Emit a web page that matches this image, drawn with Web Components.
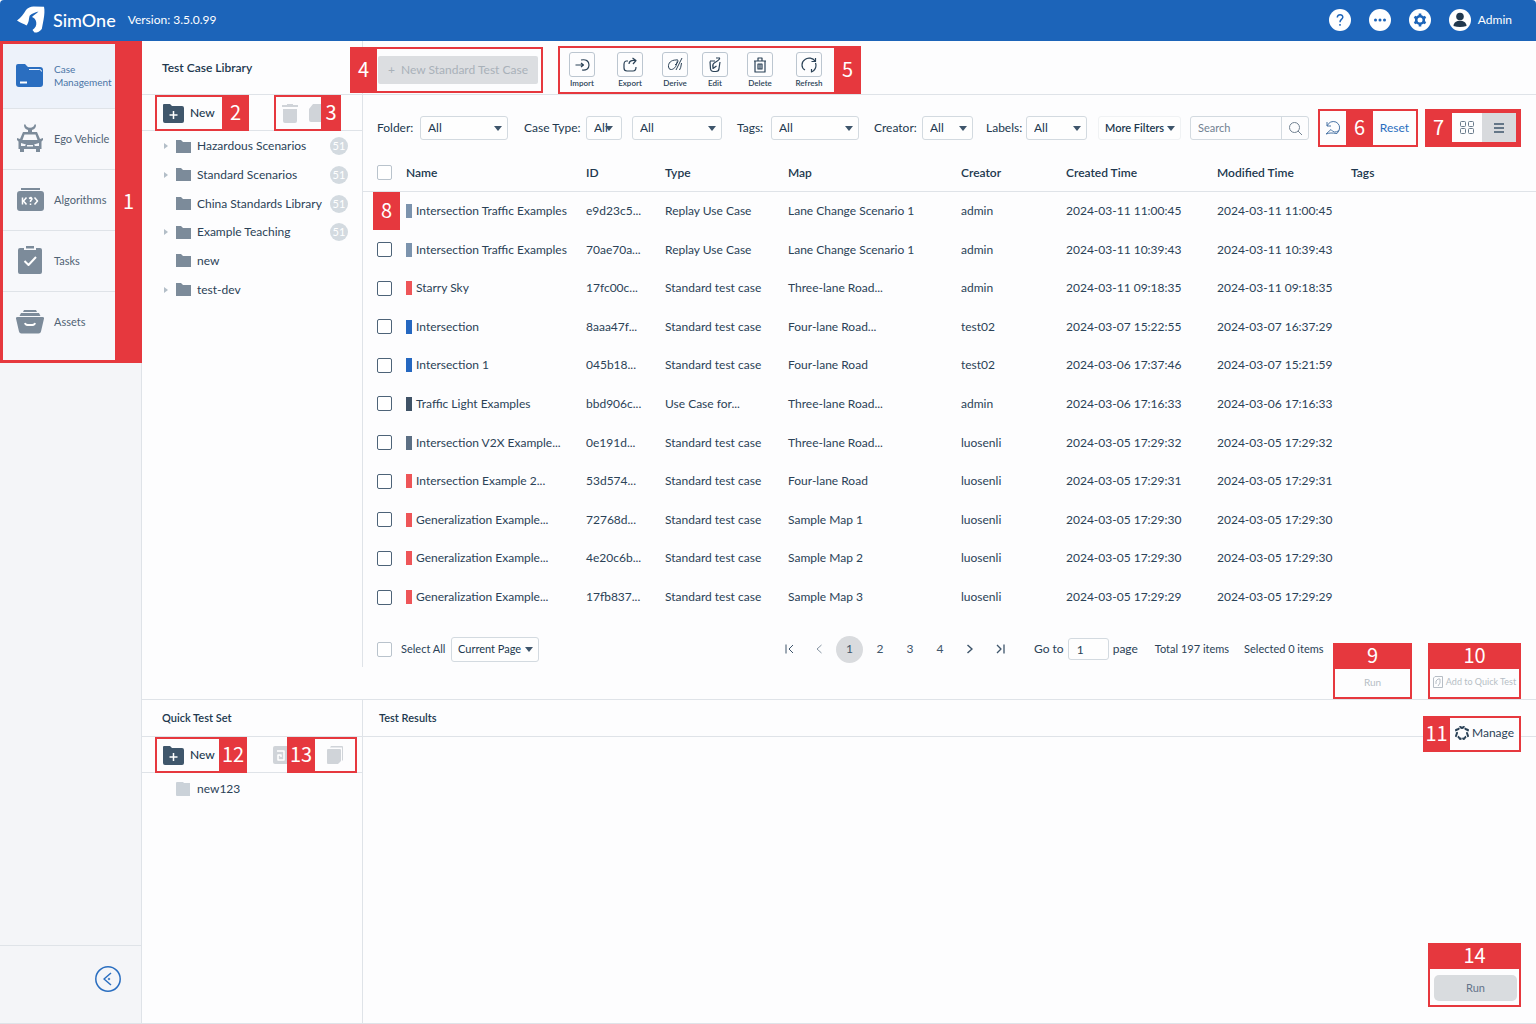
<!DOCTYPE html>
<html lang="en">
<head>
<meta charset="utf-8">
<title>SimOne</title>
<style>
  body {
    margin: 0;
    min-height: 100vh;
    font: 12px/16px Lato, "Noto Sans", sans-serif;
    color: #2b4257;
    background: #fdfdfe;
    --red: #e6383e;
    --line: #dfe3e8;
    --blue: #1c64b9;
    --dark: #21384e;
  }
</style>
</head>
<body>
<sim-app></sim-app>

<script>
const BASE = `
  *, *::before { box-sizing: border-box; }
  :host { white-space: nowrap; }
  button, select, input { font: inherit; color: inherit; margin: 0; }
  button { border: 0; padding: 0; background: none; cursor: pointer; }
  svg { display: block; flex: none; }
  ul { list-style: none; margin: 0; padding: 0; }
  h1, h2 { margin: 0; font-size: 12px; line-height: 16px; font-weight: 600; color: var(--dark); }
  input[type=checkbox] {
    appearance: none; display: block; width: 15px; height: 15px;
    border: 1px solid #4d6378; border-radius: 2px; background: #fff;
  }
  input[type=checkbox].soft { border-color: #b9c3cc; }
`;

const ICONS = {
  logo: ['0 0 28 28', `<path fill="#fff" d="M0 14.500C4 12 6.500 8 9 4 11 1.500 14 .2 17 .4L27 .8C27.800 4 27.500 9 26.500 14L24.800 23C23 25.500 20 26.800 17.500 26.600L15.500 24C18.500 22 19.800 19 19.200 16 18.800 13.500 17 11.500 15 11 17 9 19.500 7.500 21.500 5.500 18 6.500 14.500 7.500 12.800 9.500 11.600 12 12.500 16 9.500 19.500 7 18 3 16.500 0 14.500Z"/>`],
  cases: ['0 0 28 24', `<path fill="#2a6ec0" d="M2 0h7l3 3h12a3 3 0 0 1 3 3v14a3 3 0 0 1-3 3H3a3 3 0 0 1-3-3V2a2 2 0 0 1 2-2z"/><path fill="none" stroke="#eef3fb" d="M13 5.500h10.500a2 2 0 0 1 2 2"/><path stroke="#fff" stroke-width="2" d="M4 18.500h7"/>`],
  car: ['0 0 26 28', `<g fill="#7c8b9a"><path d="M8 0l1.500 2.500Q13 5 16.500 2.500L18 0l1 1q0 4-4 5v2h-4V6q-4-1-4-5z"/><path fill-rule="evenodd" d="M6 8h14l3 7 3-1v2l-1.500 1.500V25H23v3h-4v-3H7v3H3v-3H1.500v-7.500L0 16v-2l3 1zM7.500 10.500l-2 5.500h15l-2-5.500zM4 19v3h4l1-1.500zm18 0l-5 1.500 1 1.500h4zM10 21v1.500h6V21z"/></g>`],
  algo: ['0 0 27 23', `<path fill="#7c8b9a" d="M4 0h19v2H4zM3 3h21a3 3 0 0 1 3 3v14a3 3 0 0 1-3 3H3a3 3 0 0 1-3-3V6a3 3 0 0 1 3-3z"/><path fill="none" stroke="#fff" stroke-width="1.500" d="M5.500 9.500v7M9.500 9.500L6.500 13l3 3.500M12 10.500l2-1 1 1.500-1.500 2v1M13.500 15.500v1.500M17.500 9.500L20.500 13l-3 3.500"/>`],
  tasks: ['0 0 24 28', `<path fill="#7c8b9a" d="M2 2h4v2h12V2h4a2 2 0 0 1 2 2v22a2 2 0 0 1-2 2H2a2 2 0 0 1-2-2V4a2 2 0 0 1 2-2zM8 0h8v2.500H8z"/><path fill="none" stroke="#fff" stroke-width="2" d="M6.500 15l4 4L18 11"/>`],
  assets: ['0 0 28 24', `<path fill="#7c8b9a" d="M8 0h12l1 2H7zM5 3h18l1.500 3h-21zM1.500 7h25a1.500 1.500 0 0 1 1.400 2L25 21.500a2.500 2.500 0 0 1-2.500 2h-17a2.500 2.500 0 0 1-2.500-2L.1 9A1.500 1.500 0 0 1 1.500 7z"/><path fill="none" stroke="#fff" stroke-width="2" d="M9 13c.5 2 1.500 2 5 2s4.500 0 5-2"/>`],
  newFolder: ['0 0 21 19', `<path fill="#3f566b" d="M1 0h6l2 2h10a2 2 0 0 1 2 2v13a2 2 0 0 1-2 2H2a2 2 0 0 1-2-2V1a1 1 0 0 1 1-1z"/><path stroke="#fff" stroke-width="1.500" d="M10.500 7v8M6.500 11h8"/>`],
  folder: ['0 0 15 13', `<path fill="#7c8b9a" d="M0 0h5l2 2h8v11H0z"/>`],
  folderSoft: ['0 0 15 14', `<path fill="#cbd2d9" d="M1 0h6l1 1h6v13H1a1 1 0 0 1-1-1V1a1 1 0 0 1 1-1z"/>`],
  caretRight: ['0 0 4 6', `<path fill="#b3bec8" d="M0 0l4 3-4 3z"/>`],
  caret: ['0 0 8 5', `<path fill="#3e556b" d="M0 0h8L4 5z"/>`],
  trash: ['0 0 16 19', `<path fill="#d0d4d9" d="M5 0h6v1h5v2H0V1h5zM1 5h14v12a2 2 0 0 1-2 2H3a2 2 0 0 1-2-2z"/>`],
  clip: ['0 0 18 18', `<path fill="#d0d4d9" d="M4 0h8l2 3h4v13a2 2 0 0 1-2 2H2a2 2 0 0 1-2-2V5z"/>`],
  doc: ['0 0 14 18', `<path fill="#d0d4d9" d="M2 0h12v18H2a2 2 0 0 1-2-2V2a2 2 0 0 1 2-2z"/><path fill="none" stroke="#fff" stroke-width="1.500" d="M4 5h7v9H5v-5h3v2"/>`],
  copy: ['0 0 16 18', `<path fill="#d0d4d9" d="M4 0h11a1 1 0 0 1 1 1v13l-1 1V1.500H3zM1 3h12a1 1 0 0 1 1 1v11l-3 3H1a1 1 0 0 1-1-1V4a1 1 0 0 1 1-1z"/>`],
  imp: ['0 0 16 16', `<path stroke-width="1.200" d="M1.500 8h8M7 6l2.500 2L7 10M7 3c5-1 8 1 8 5s-3 5.500-7 5"/>`],
  exp: ['0 0 16 16', `<path stroke-width="1.200" d="M6 4H4Q2 4.500 2 7v4q0 3 3 3h6q3 0 3-4M7 7q0-4 6-3.500M10.500 1L14 3.500 11 7"/>`],
  der: ['0 0 16 16', `<path d="M9 3C4 3 1 6 1.500 10q.5 3 3 2.500C8 12 10 8 10 4.500M9 3q2-1 2 1T8 8M15 1L9 13M14.500 6q-.5 5-2 7"/>`],
  edit: ['0 0 14 16', `<path stroke-width="1.200" d="M2 4h5M2 4.500l.5 7.500q.5 2.500 3 2.500h2.500q3 0 3-3L12 5M5 10.500Q4 7 7 5.500T12 1.500M12 1H8M5 7.500v4L8.500 9"/>`],
  del: ['0 0 14 16', `<path stroke-width="1.200" d="M1 4h12M5 4V1h4v3M2 4v11h10V4M5 7h4v5H5zM7 7v5"/>`],
  ref: ['0 0 16 16', `<path stroke-width="1.200" d="M4 13C0 11 0 5 4 2.500 7 0 12 1 14 4M10.500 4.500H14.500V1M14.500 6c1.500 4-1 8-4 9M10.500 12v3.500"/>`],
  search: ['0 0 13 13', `<circle cx="5.500" cy="5.500" r="5"/><path d="M9 9l4 4"/>`],
  swap: ['0 0 16 16', `<path d="M2 6Q5 0 11 2q5 3 3 8.500Q9 14 6 9.500M2 2v4h4M1 14l5-4.500M1 14q3-1 5-1t6 .5l2-3"/>`],
  grid: ['0 0 14 13', `<rect x=".5" y=".5" width="5" height="5" rx="1"/><rect x="8.500" y=".5" width="5" height="5" rx="1"/><rect x=".5" y="7.500" width="5" height="5" rx="1"/><rect x="8.500" y="7.500" width="5" height="5" rx="1"/>`],
  list: ['0 0 10 10', `<path stroke-width="1.500" d="M0 1h10M0 5h10M0 9h10"/>`],
  first: ['0 0 9 10', `<path d="M1 0.500v9M8 1L4 5l4 4"/>`],
  prev: ['0 0 6 10', `<path d="M5.500 1l-4.500 4 4.500 4"/>`],
  next: ['0 0 6 10', `<path stroke-width="1.500" d="M.5 1L5 5 .5 9"/>`],
  last: ['0 0 9 10', `<path stroke-width="1.300" d="M8 0.500v9M1 1l4 4-4 4"/>`],
  note: ['0 0 10 12', `<path d="M2 .5h7.500v11H.5V2zM3 8V5l2-2h2v4l-2 3"/>`],
  cog: ['0 0 16 16', `<path stroke-width="2" stroke-dasharray="5 1" d="M6 2L8 3l2-1 1.500 2L14 5l-1 3 1 3-2.500 1L10 14l-2-1-2 1-1.500-2L2 11l1-3-1-3 2.500-1z"/>`],
  help: ['0 0 22 22', `<circle cx="11" cy="11" r="11" fill="#fff"/><path fill="none" stroke="#1c64b9" stroke-width="1.500" d="M8.300 8.500C8.300 4.500 14 5 13.800 8.300 13.600 10.500 11 10.500 11 13.200M11 15v1.800"/>`],
  more: ['0 0 22 22', `<circle cx="11" cy="11" r="11" fill="#fff"/><g fill="#1c64b9"><circle cx="6.500" cy="11" r="1.500"/><circle cx="11" cy="11" r="1.500"/><circle cx="15.500" cy="11" r="1.500"/></g>`],
  gear: ['0 0 22 22', `<circle cx="11" cy="11" r="11" fill="#fff"/><circle cx="11" cy="11" r="3.800" fill="none" stroke="#1c64b9" stroke-width="2.600"/><path stroke="#1c64b9" stroke-width="2.600" d="M11 4.500v3M11 14.500v3M5.400 7.800l2.400 1.400M14.200 12.800l2.400 1.400M5.400 14.200l2.400-1.400M14.200 9.200l2.400-1.400"/>`],
  user: ['0 0 22 22', `<circle cx="11" cy="11" r="11" fill="#fff"/><circle cx="11" cy="7.500" r="3.800" fill="#21384e"/><path fill="#21384e" d="M4.500 17c0-7 13-7 13 0q-6.500 2-13 0z"/>`],
  collapse: ['0 0 26 26', `<circle cx="13" cy="13" r="12.200" stroke-width="1.500"/><path stroke-width="1.500" d="M16 7l-7 6 7 6"/><circle cx="14" cy="13" r=".8"/>`]
};

function icon(name) {
  const [box, body] = ICONS[name];
  const [, , w, h] = box.split(' ');
  return `<svg viewBox="${box}" width="${w}" height="${h}" fill="none" stroke-linejoin="round" aria-hidden="true">${body}</svg>`;
}

// line icons take the text colour
const line = name => icon(name).replace('<svg', '<svg stroke="currentColor"');

function define(tag, css, html) {
  customElements.define(tag, class extends HTMLElement {
    constructor() {
      super();
      this.attachShadow({ mode: 'open' });
    }
    connectedCallback() {
      const body = typeof html === 'function' ? html(this) : html;
      this.shadowRoot.innerHTML = `<style>${BASE}${css}</style>${body}`;
    }
  });
}

// red numbered frame; content goes before the number, or after it with slot="end"
define('mark-box', `
  :host { display: flex; box-sizing: border-box; align-items: stretch; position: relative; z-index: 1; border: var(--b, 2px) solid var(--red); background: #fdfdfe; }
  :host([top]) { flex-direction: column; }
  .num {
    display: flex; align-items: center; justify-content: center; flex: none; width: var(--n, 27px);
    padding-bottom: 2px; background: var(--red); color: #fff;
    font: 400 20px/22px "Noto Sans CJK SC", sans-serif;
  }
  :host([side=left]) { border-left: 0; }
  :host([side=right]) { border-right: 0; }
  :host([top]) .num { width: auto; height: 24px; padding-bottom: 4px; }
  slot { display: contents; }
`, el => `<slot></slot><span class="num">${el.getAttribute('n')}</span><slot name="end"></slot>`);

define('drop-down', `
  :host { display: flex; align-items: center; flex: none; color: var(--dark); }
  label { width: var(--l); }
  .box { display: grid; align-items: center; width: var(--w, 88px); }
  select {
    grid-area: 1 / 1; width: 100%; height: var(--h, 24px); padding: 0 7px; appearance: none;
    border: 1px solid #d3dae0; border-radius: 3px; background: #fefefe;
  }
  svg { grid-area: 1 / 1; justify-self: end; margin-right: var(--caret, 6px); pointer-events: none; }
  :host([small]) select { font-size: 11px; padding: 0 6px; }
  :host([plain]) select { border-color: #f0f2f4; font-weight: 600; }
`, el => {
  const label = el.getAttribute('label');
  const name = el.getAttribute('name') || label;
  return `${label ? `<label for="s">${label}:</label>` : ''}
    <span class="box"><select id="s" aria-label="${name}"><option>${el.getAttribute('value') || 'All'}</option></select>${icon('caret')}</span>`;
});

define('app-header', `
  :host { display: flex; box-sizing: border-box; align-items: center; height: 41px; padding: 0 22px 2px 17px; background: var(--blue); color: #fff; border-radius: 4px 4px 0 0; }
  .name { font-size: 18px; line-height: 24px; margin: 0 12px 0 8px; color: #fff; font-weight: 500; }
  nav { display: flex; align-items: center; gap: 18px; margin-left: auto; }
  .user { display: flex; align-items: center; gap: 7px; padding-right: 2px; }
`, `
  ${icon('logo')}
  <h1 class="name">SimOne</h1>
  <span>Version: 3.5.0.99</span>
  <nav>
    <button aria-label="Help">${icon('help')}</button>
    <button aria-label="More">${icon('more')}</button>
    <button aria-label="Settings">${icon('gear')}</button>
    <button class="user">${icon('user')}Admin</button>
  </nav>
`);

const NAV = [
  ['cases', 'Case<br>Management'],
  ['car', 'Ego Vehicle'],
  ['algo', 'Algorithms'],
  ['tasks', 'Tasks'],
  ['assets', 'Assets']
];

define('side-nav', `
  :host { display: flex; flex-direction: column; background: #f4f5f8; border-right: 1px solid var(--line); }
  mark-box { --b: 3px; margin-right: -1px; }
  ul { flex: 1; min-width: 0; background: #f7f8fb; padding-bottom: 7px; }
  a {
    display: grid; grid-template-columns: 26px 1fr; justify-items: center; align-items: center; column-gap: 11px;
    height: 61px; padding: 0 0 2px 14px;
    border-bottom: 1px solid var(--line); color: #506274; text-decoration: none; font-size: 11px; line-height: 13px;
  }
  a span { justify-self: start; }
  li:first-child a { height: 65px; padding-bottom: 0; background: #edf2fa; color: #4a75a6; font-size: 10px; }
  li:last-child a { border: 0; }
  .foot { margin-top: auto; height: 78px; padding: 20px 20px 0; border-top: 1px solid var(--line); display: flex; justify-content: flex-end; align-items: flex-start; color: #2a6ec0; }
`, `
  <mark-box n="1" side="right">
    <ul>${NAV.map(([i, t]) => `<li><a href="#">${icon(i)}<span>${t}</span></a></li>`).join('')}</ul>
  </mark-box>
  <div class="foot"><button aria-label="Collapse">${line('collapse')}</button></div>
`);

// shared look of the two folder panels on the left
const PANEL = `
  :host { display: block; border-right: 1px solid var(--line); }
  h2 { display: flex; align-items: center; padding: 0 20px; border-bottom: 1px solid var(--line); }
  .bar { display: flex; height: 36px; padding: 0 4px 0 13px; border-bottom: 1px solid var(--line); }
  .bar mark-box { margin-bottom: -1px; }
  .new { display: flex; align-items: center; gap: 6px; width: var(--new, 65px); padding-left: 6px; color: var(--dark); font-weight: 500; }
  .tool { display: flex; align-items: center; }
  li { display: flex; align-items: center; padding: 0 14px 0 22px; }
  li svg:first-child { margin-right: 8px; }
  li a { color: inherit; text-decoration: none; margin-left: 6px; }
`;

const FOLDERS = [
  ['Hazardous Scenarios', 1, 1],
  ['Standard Scenarios', 1, 1],
  ['China Standards Library', 0, 1],
  ['Example Teaching', 1, 1],
  ['new', 0, 0],
  ['test-dev', 1, 0]
];

define('case-library', `${PANEL}
  :host { margin-bottom: 32px; }
  h2 { height: 54px; }
  .tools { --n: 20px; margin-left: 25px; }
  .pair { display: flex; gap: 11px; width: 45px; padding-left: 6px; overflow: hidden; }
  ul { display: grid; grid-auto-rows: 1fr; height: 172px; margin-top: 1px; }
  .count { margin-left: auto; width: 18px; height: 18px; border-radius: 9px; background: #d3dae0; color: #fff; text-align: center; font-size: 11px; line-height: 18px; }
  .none { width: 4px; margin-right: 8px; }
`, `
  <h2>Test Case Library</h2>
  <div class="bar">
    <mark-box n="2" side="right"><button class="new">${icon('newFolder')}New</button></mark-box>
    <mark-box class="tools" n="3" side="right">
      <div class="pair"><button class="tool" aria-label="Delete">${icon('trash')}</button><button class="tool" aria-label="Paste">${icon('clip')}</button></div>
    </mark-box>
  </div>
  <ul>${FOLDERS.map(([name, open, count]) => `
    <li>${open ? icon('caretRight') : '<span class="none"></span>'}${icon('folder')}<a href="#">${name}</a>${count ? '<span class="count">51</span>' : ''}</li>`).join('')}
  </ul>
`);

define('quick-set', `${PANEL}
  :host { --n: 28px; --new: 62px; }
  h2 { height: 37px; font-size: 11px; }
  .doc { margin-left: 26px; width: 14px; overflow: hidden; }
  .copy { width: 40px; justify-content: center; }
  li { height: 31px; padding-left: 34px; }
  li svg:first-child { margin-right: 0; }
`, `
  <h2>Quick Test Set</h2>
  <div class="bar">
    <mark-box n="12" side="right"><button class="new">${icon('newFolder')}New</button></mark-box>
    <button class="tool doc" aria-label="Save">${icon('doc')}</button>
    <mark-box n="13" side="left"><button class="tool copy" slot="end" aria-label="Copy">${icon('copy')}</button></mark-box>
  </div>
  <ul><li>${icon('folderSoft')}<a href="#">new123</a></li></ul>
`);

define('case-toolbar', `
  :host { display: flex; box-sizing: border-box; align-items: flex-start; gap: 15px; height: 54px; padding-top: 5px; border-bottom: 1px solid var(--line); }
  .create { margin: 1px 0 0 -13px; }
  .create button { display: flex; align-items: center; justify-content: center; gap: 6px; width: 160px; height: 28px; margin: 7px 3px 7px 1px; border-radius: 2px; background: #dcdee1; color: #a9b1b9; }
  .actions { display: grid; grid-template-columns: 44px 52px 38px 42px 48px 50px; height: 44px; }
  .actions button { display: flex; flex-direction: column; align-items: center; padding-top: 4px; font-size: 8px; line-height: 12px; font-weight: 600; }
  .actions i { display: grid; place-items: center; width: 26px; height: 25px; border: 1px solid #bcc6d0; border-radius: 3px; }
`, `
  <mark-box class="create" n="4" side="left"><button slot="end" disabled><span>+</span>New Standard Test Case</button></mark-box>
  <mark-box n="5" side="right"><div class="actions">
    ${[['imp', 'Import'], ['exp', 'Export'], ['der', 'Derive'], ['edit', 'Edit'], ['del', 'Delete'], ['ref', 'Refresh']]
      .map(([i, t]) => `<button><i>${line(i)}</i>${t}</button>`).join('')}
  </div></mark-box>
`);

define('case-filters', `
  :host { display: flex; box-sizing: border-box; align-items: center; height: 59px; padding: 7px 15px 0 14px; }
  drop-down { margin-right: 15px; }
  .search { display: flex; height: 24px; width: 119px; margin-right: 9px; border: 1px solid #d3dae0; border-radius: 3px; }
  .search input { flex: 1; min-width: 0; border: 0; padding: 0 7px; background: none; outline: 0; font-size: 11px; }
  .search input::placeholder { color: #718191; }
  .search button { width: 27px; display: grid; place-items: center; border-left: 1px solid #d3dae0; color: #718191; }
  mark-box { height: 38px; }
  .swap { width: 26px; display: grid; place-items: center; color: #4a75a6; }
  .text { width: 43px; color: #2a6ec0; }
  .views { margin-left: auto; border-width: 4px 5px 5px 0; }
  .view { width: 30px; display: grid; place-items: center; color: #6b7c8c; }
  .view.on { width: 34px; background: #d8dadd; color: #3e556b; }
`, `
  <drop-down label="Folder" style="--l:43px;margin-right:16px"></drop-down>
  <drop-down label="Case Type" style="--l:62px;--w:36px;--caret:9px;margin-right:10px"></drop-down>
  <drop-down name="Case subtype" style="--w:90px"></drop-down>
  <drop-down label="Tags" style="--l:34px"></drop-down>
  <drop-down label="Creator" style="--l:48px;--w:51px;margin-right:13px"></drop-down>
  <drop-down label="Labels" style="--l:40px;--w:61px;margin-right:11px"></drop-down>
  <drop-down plain small name="More" value="More Filters" style="--w:83px;margin-right:9px"></drop-down>
  <div class="search"><input type="text" placeholder="Search" aria-label="Search"><button aria-label="Search">${line('search')}</button></div>
  <mark-box n="6"><button class="swap" aria-label="Reload">${line('swap')}</button><button slot="end" class="text">Reset</button></mark-box>
  <mark-box n="7" side="left" class="views"><button slot="end" class="view" aria-label="Grid">${line('grid')}</button><button slot="end" class="view on" aria-label="List">${line('list')}</button></mark-box>
`);

const STD = 'Standard test case';
const ROWS = [
  ['#7c93ad', 'Intersection Traffic Examples', 'e9d23c5...', 'Replay Use Case', 'Lane Change Scenario 1', 'admin', '2024-03-11 11:00:45', '2024-03-11 11:00:45'],
  ['#7c93ad', 'Intersection Traffic Examples', '70ae70a...', 'Replay Use Case', 'Lane Change Scenario 1', 'admin', '2024-03-11 10:39:43', '2024-03-11 10:39:43'],
  ['#ee5558', 'Starry Sky', '17fc00c...', STD, 'Three-lane Road...', 'admin', '2024-03-11 09:18:35', '2024-03-11 09:18:35'],
  ['#2567c0', 'Intersection', '8aaa47f...', STD, 'Four-lane Road...', 'test02', '2024-03-07 15:22:55', '2024-03-07 16:37:29'],
  ['#2567c0', 'Intersection 1', '045b18...', STD, 'Four-lane Road', 'test02', '2024-03-06 17:37:46', '2024-03-07 15:21:59'],
  ['#3f5266', 'Traffic Light Examples', 'bbd906c...', 'Use Case for...', 'Three-lane Road...', 'admin', '2024-03-06 17:16:33', '2024-03-06 17:16:33'],
  ['#5c6f84', 'Intersection V2X Example...', '0e191d...', STD, 'Three-lane Road...', 'luosenli', '2024-03-05 17:29:32', '2024-03-05 17:29:32'],
  ['#ee5558', 'Intersection Example 2...', '53d574...', STD, 'Four-lane Road', 'luosenli', '2024-03-05 17:29:31', '2024-03-05 17:29:31'],
  ['#ee5558', 'Generalization Example...', '72768d...', STD, 'Sample Map 1', 'luosenli', '2024-03-05 17:29:30', '2024-03-05 17:29:30'],
  ['#ee5558', 'Generalization Example...', '4e20c6b...', STD, 'Sample Map 2', 'luosenli', '2024-03-05 17:29:30', '2024-03-05 17:29:30'],
  ['#ee5558', 'Generalization Example...', '17fb837...', STD, 'Sample Map 3', 'luosenli', '2024-03-05 17:29:29', '2024-03-05 17:29:29']
];
const COLS = [['Name', 180], ['ID', 79], ['Type', 123], ['Map', 173], ['Creator', 105], ['Created Time', 151], ['Modified Time', 134], ['Tags', 0]];

define('case-table', `
  :host { display: block; }
  table { width: 100%; height: 463px; table-layout: fixed; border-collapse: collapse; }
  th, td { padding: 0; text-align: left; position: relative; }
  td { padding-bottom: 1px; }
  th { height: 37px; padding-top: 1px; border-bottom: 1px solid var(--line); font-weight: 600; color: var(--dark); }
  th:first-child, td:first-child { padding-left: 14px; }
  .bar { display: inline-block; vertical-align: -3px; width: 6px; height: 14px; margin-right: 4px; }
  .badge { position: absolute; left: 10px; top: 0; width: 27px; height: 38px; display: grid; place-items: center; padding-bottom: 2px; background: var(--red); color: #fff; font: 400 20px/22px "Noto Sans CJK SC", sans-serif; }
`, `
  <table>
    <colgroup><col style="width:43px">${COLS.map(([, w]) => w ? `<col style="width:${w}px">` : '<col>').join('')}</colgroup>
    <thead><tr><th><input type="checkbox" class="soft" aria-label="Select all rows"></th>${COLS.map(([t]) => `<th scope="col">${t}</th>`).join('')}</tr></thead>
    <tbody>${ROWS.map(([color, name, ...rest], i) => `
      <tr>
        <td><input type="checkbox" aria-label="Select row ${i + 1}">${i ? '' : '<span class="badge">8</span>'}</td>
        <td><span class="bar" style="background:${color}"></span>${name}</td>
        ${rest.map(t => `<td>${t}</td>`).join('')}<td></td>
      </tr>`).join('')}
    </tbody>
  </table>
`);

define('case-pager', `
  :host { display: flex; box-sizing: border-box; align-items: center; height: 64px; padding: 0 15px 0 14px; }
  label { display: flex; align-items: center; }
  .all { gap: 9px; width: 74px; }
  .all, .count { font-size: 11px; }
  ol { display: flex; list-style: none; margin: 0 0 0 235px; padding: 0; }
  li button { display: grid; place-items: center; width: 30px; height: 27px; border-radius: 14px; color: #3e556b; }
  li button.on { width: 27px; margin: 0 2px; background: #d9dbde; }
  li.dim { color: #8593a1; }
  li.dim button { color: inherit; }
  .go { gap: 4px; margin-left: 19px; }
  .go input { width: 41px; height: 22px; padding: 0 8px; border: 1px solid #d3dae0; border-radius: 3px; background: #fefefe; }
  .total { margin: 0 15px 0 17px; }
  .ends { display: flex; gap: 16px; align-self: flex-start; height: 56px; margin: 26px 0 -18px auto; }
  .ends button { display: flex; align-items: center; justify-content: center; gap: 3px; flex: 1; padding-bottom: 2px; font-size: 10px; color: #b6bdc5; }
  .run { width: 79px; }
  .add { width: 93px; }
  .ends .add button { font-size: 9px; }
`, `
  <label class="all"><input type="checkbox" class="soft">Select All</label>
  <drop-down small name="Selection scope" value="Current Page" style="--w:88px;--h:25px"></drop-down>
  <ol>
    <li><button aria-label="First page">${line('first')}</button></li>
    <li class="dim"><button aria-label="Previous page">${line('prev')}</button></li>
    <li><button class="on">1</button></li>
    <li><button>2</button></li>
    <li><button>3</button></li>
    <li><button>4</button></li>
    <li><button aria-label="Next page">${line('next')}</button></li>
    <li><button aria-label="Last page">${line('last')}</button></li>
  </ol>
  <label class="go">Go to <input type="text" value="1"> page</label>
  <span class="count total">Total 197 items</span>
  <span class="count">Selected 0 items</span>
  <div class="ends">
    <mark-box top n="9" class="run"><button slot="end" disabled>Run</button></mark-box>
    <mark-box top n="10" class="add"><button slot="end" disabled>${line('note')}Add to Quick Test</button></mark-box>
  </div>
`);

define('test-results', `
  :host { display: flex; flex-direction: column; align-items: flex-end; padding-bottom: 16px; }
  header { display: flex; align-items: center; justify-content: space-between; align-self: stretch; height: 37px; padding: 0 15px 0 16px; border-bottom: 1px solid var(--line); }
  h2 { font-size: 11px; }
  header mark-box { height: 36px; margin-bottom: -32px; }
  .manage { display: flex; align-items: center; gap: 2px; width: 69px; padding: 0 0 2px 4px; }
  .run { width: 93px; height: 64px; margin: auto 15px 0 0; }
  .run button { height: 26px; margin: 6px 2px 4px 4px; border-radius: 5px; background: #d9dcdf; color: #64748a; font-size: 11px; }
`, `
  <header>
    <h2>Test Results</h2>
    <mark-box n="11" side="left"><button slot="end" class="manage">${line('cog')}Manage</button></mark-box>
  </header>
  <mark-box top n="14" class="run"><button slot="end">Run</button></mark-box>
`);

define('sim-app', `
  :host { display: flex; flex-direction: column; min-height: 100vh; }
  main { flex: 1; display: grid; grid-template-columns: 142px 1fr; border: solid var(--line); border-width: 0 0 1px; }
  .work { display: grid; grid-template-columns: 221px 1fr; grid-template-rows: auto 1fr; min-width: 0; }
  .work > * { min-width: 0; }
  section { padding-bottom: 18px; }
  quick-set, test-results { border-top: 1px solid var(--line); }
`, `
  <app-header></app-header>
  <main>
    <side-nav></side-nav>
    <div class="work">
      <case-library></case-library>
      <section>
        <case-toolbar></case-toolbar>
        <case-filters></case-filters>
        <case-table></case-table>
        <case-pager></case-pager>
      </section>
      <quick-set></quick-set>
      <test-results></test-results>
    </div>
  </main>
`);
</script>
</body>
</html>
